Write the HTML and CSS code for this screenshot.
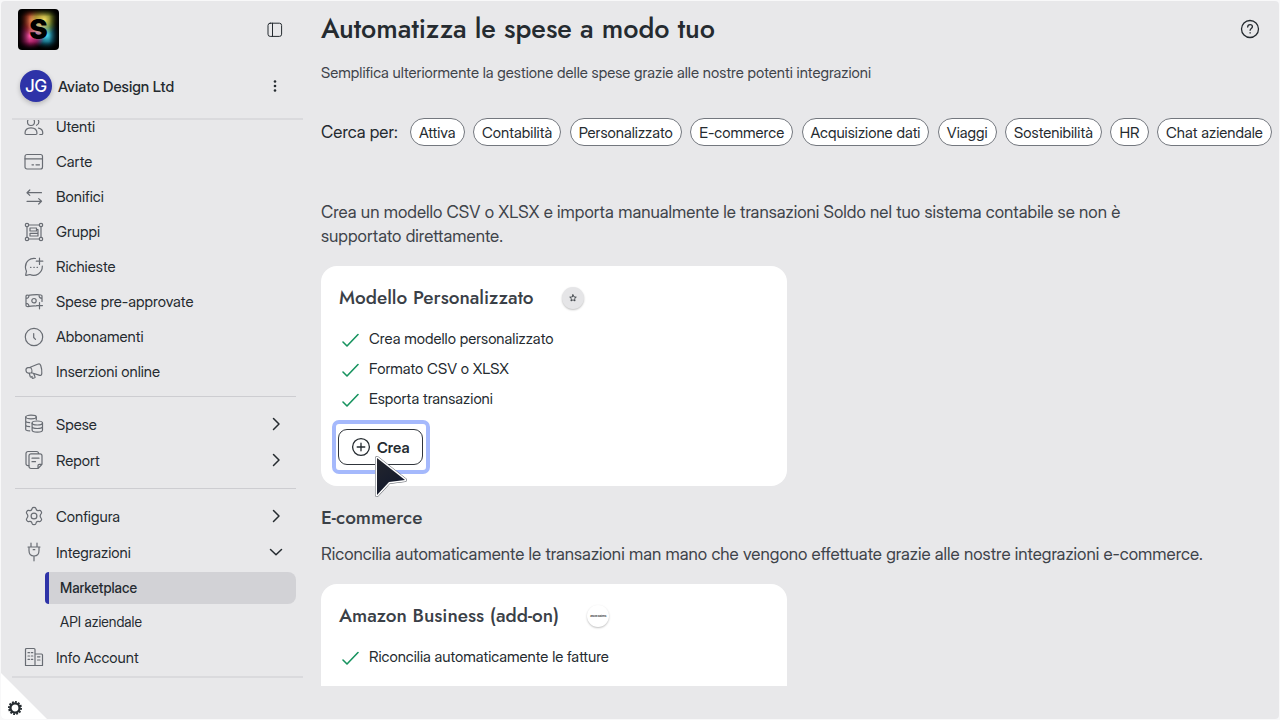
FILE: index.html
```html
<!DOCTYPE html>
<html lang="it">
<head>
<meta charset="utf-8">
<meta name="viewport" content="width=device-width, initial-scale=1">
<title>Automatizza le spese a modo tuo</title>
<link rel="stylesheet" href="styles.css">
</head>
<body>
<div class="shell">
  <aside class="sidebar">
    <div class="brand">
      <a class="logo" href="#" aria-label="Soldo">S</a>
      <button class="icon-btn" type="button" aria-label="Riduci menu">
        <svg width="16" height="16" viewBox="0 0 16 16"><rect x="1" y="1.200" width="13.600" height="13.200" rx="2.200"/><path d="M5.500 1.200v13.200"/></svg>
      </button>
    </div>
    <div class="account">
      <span class="avatar">JG</span>
      <span class="account-name">Aviato Design Ltd</span>
      <button class="icon-btn dots" type="button" aria-label="Altre opzioni">
        <svg width="16" height="16" viewBox="0 0 16 16"><circle cx="8" cy="3.500" r="1.300"/><circle cx="8" cy="8" r="1.300"/><circle cx="8" cy="12.500" r="1.300"/></svg>
      </button>
    </div>
    <nav class="nav">
      <div class="group first">
        <a class="item" href="#"><svg class="ico" viewBox="0 0 20 20"><circle cx="7" cy="5" r="3.500"/><path d="M12.500 1.700a3.500 3.500 0 0 1 0 6.600M1 16.300c0-3.300 2.200-5.500 6-5.500s6 2.200 6 5.500c0 .8-.5 1.200-1.200 1.200H2.200c-.7 0-1.200-.4-1.200-1.200zM14.500 11.200c2.800.5 4.300 2.500 4.300 5 0 .9-.5 1.300-1.300 1.300h-1.700"/></svg>Utenti</a>
        <a class="item" href="#"><svg class="ico" viewBox="0 0 20 20"><rect x="1" y="2.500" width="17.500" height="14.500" rx="2"/><path d="M1 6.800h17.500M8 12.800h1.500M12 12.800h3.500"/></svg>Carte</a>
        <a class="item" href="#"><svg class="ico" viewBox="0 0 20 20"><path d="M17.500 5.700H3M5.800 3 3 5.700l2.800 2.700M3 14.300h14.500M14.700 11.600l2.800 2.700-2.800 2.700"/></svg>Bonifici</a>
        <a class="item" href="#"><svg class="ico" viewBox="0 0 20 20"><circle cx="3" cy="3" r="1.700"/><circle cx="17" cy="3" r="1.700"/><circle cx="3" cy="17" r="1.700"/><circle cx="17" cy="17" r="1.700"/><path d="M4.700 3h10.600M4.700 17h10.600M3 4.700v10.600M17 4.700v10.600M6 6h6.500v3H6zM6 11.300h8V14H6zM12.500 7.500H14v3.800"/></svg>Gruppi</a>
        <a class="item" href="#"><svg class="ico" viewBox="0 0 20 20"><path d="M11.500 1.500C5.800.7 1.400 4.600 1.400 9.900c0 1.700.4 3 1.100 4.300L1.700 17.800c-.1.500.2.700.6.600l3.600-.9c5.700 2.500 12.700-1.300 12.400-8.500M15.500 1v6.500M12.300 4.200h6.500M6.500 10.300h.5M9.800 10.300h.5M13 10.300h.5"/></svg>Richieste</a>
        <a class="item" href="#"><svg class="ico" viewBox="0 0 20 20"><path d="M12 14c-3.500-.8-5.600.9-9 .5-.6-.1-1-.4-1-1V4.200c0-.7.4-1 1-1 4.500.4 8-1.300 14-.2.700.1 1 .5 1 1v5.500M2 6.500c2 0 3-1.300 3-3.200M2 11.300c1.800 0 3 1.200 3 3M18 6.300c-1.800 0-3-1.300-3-3.300M15.500 10.500v6.300M12.500 13.600h6"/><circle cx="10" cy="8.700" r="2.200"/></svg>Spese pre-approvate</a>
        <a class="item" href="#"><svg class="ico" viewBox="0 0 20 20"><circle cx="10" cy="10" r="8.700"/><path d="M9.700 6.500v4l1.800 1.800"/></svg>Abbonamenti</a>
        <a class="item" href="#"><svg class="ico" viewBox="0 0 20 20"><path d="m6.200 5.300 7.300-3.100c2-.8 2.600-.3 3.300 1.600.9 2.600 1.200 4.900 1 7.600-.2 2-1 2.300-2.800 1.700l-7.500-2.300M6.200 5.300 3.800 5.600C2.200 5.900 1.800 7 2 8.500c.2 1.700 1 2.700 2.700 2.500l2.800-.2c.9-1.700.2-4.300-1.300-5.500zM5.200 11l1 3.500c.2.500.5.700 1 .5l.9-.5v1.200c.2.600.5.700 1 .6l1.500-.5c.5-.2.600-.6.400-1l-1.300-3.100"/></svg>Inserzioni online</a>
      </div>
      <div class="group">
        <a class="item" href="#"><svg class="ico" viewBox="0 0 20 20"><ellipse cx="7" cy="3" rx="5.300" ry="1.800"/><path d="M1.700 3v12.200c0 1 2 1.600 4 1.700M1.700 7c0 .9 1.800 1.500 4 1.700M1.700 11c0 .9 1.800 1.500 4 1.700M12.300 3v2.700"/><ellipse cx="13.300" cy="9" rx="5.200" ry="2"/><path d="M8.100 9v7c0 1.200 2.300 2.100 5.200 2.100s5.200-.9 5.200-2.100V9M8.100 12.500c0 1.200 2.300 2 5.200 2s5.200-.8 5.200-2"/></svg>Spese<svg class="chev" viewBox="0 0 16 16"><path d="m5.500 2.500 5.500 5.500-5.500 5.500"/></svg></a>
        <a class="item" href="#"><svg class="ico" viewBox="0 0 20 20"><path d="M4.800 15.700H4A2 2 0 0 1 2 13.700V3.500a2 2 0 0 1 2-2h8.500a2 2 0 0 1 2 2"/><path d="M7 3.800h9a2 2 0 0 1 2 2v8.500L14 18.500H7a2 2 0 0 1-2-2V5.800a2 2 0 0 1 2-2zM18 14.300h-2.800c-.7 0-1.200.5-1.200 1.200v3M8 8.200h7M8 11.700h3.500"/></svg>Report<svg class="chev" viewBox="0 0 16 16"><path d="m5.500 2.500 5.500 5.500-5.500 5.500"/></svg></a>
      </div>
      <div class="group last">
        <a class="item" href="#"><svg class="ico" viewBox="0 0 20 20"><path d="M8.200 2.300c.5-1.200 3.100-1.200 3.600 0l.5 1.300c.4.700 1.100 1.100 1.900 1l1.300-.2c1.300-.2 2.600 2.100 1.800 3.100l-.8 1.200c-.4.700-.4 1.800 0 2.600l.8 1.200c.8 1-.5 3.300-1.800 3.100l-1.300-.2c-.8-.1-1.500.3-1.900 1l-.5 1.300c-.5 1.200-3.100 1.200-3.600 0l-.5-1.300c-.4-.7-1.100-1.100-1.900-1l-1.300.2c-1.300.2-2.600-2.100-1.800-3.100l.8-1.200c.4-.8.4-1.900 0-2.600l-.8-1.200c-.8-1 .5-3.300 1.800-3.100l1.300.2c.8.100 1.500-.3 1.900-1z"/><circle cx="10" cy="10" r="2.900"/></svg>Configura<svg class="chev" viewBox="0 0 16 16"><path d="m5.500 2.500 5.500 5.500-5.500 5.500"/></svg></a>
        <a class="item" href="#"><svg class="ico" viewBox="0 0 20 20"><path d="M7 1v4M13 1v4M4 5h12M5 5v3.500c0 3.500 2 5.500 5 5.500s5-2 5-5.500V5M10 14v4.800M9.200 7.700h1.600"/></svg>Integrazioni<svg class="chev" viewBox="0 0 16 16"><path d="m2.500 5.500 5.500 5.300 5.500-5.300"/></svg></a>
        <a class="sub active" href="#" aria-current="page">Marketplace</a>
        <a class="sub" href="#">API aziendale</a>
        <a class="item" href="#"><svg class="ico" viewBox="0 0 20 20"><path d="M1.500 18.500v-16a1 1 0 0 1 1-1H10a1 1 0 0 1 1 1v16M11 7h6.500a1 1 0 0 1 1 1v10.500H1.500M4 5.700h1.500M7.300 5.700h1.500M4 9h1.500M7.300 9h1.500M4 12.300h1.500M7.300 12.300h1.500M13.500 9.800H16M13.500 13H16"/></svg>Info Account</a>
      </div>
    </nav>
  </aside>

  <main class="main">
    <header class="head">
      <h1>Automatizza le spese a modo tuo</h1>
      <button class="icon-btn help" type="button" aria-label="Aiuto">
        <svg width="20" height="20" viewBox="0 0 20 20"><circle cx="10" cy="10" r="8.500"/><path d="M7.700 8c0-1.500 1-2.400 2.400-2.400s2.300.9 2.300 2.100c0 1.700-2.300 1.800-2.300 3.600M10.100 13.600v.5"/></svg>
      </button>
    </header>
    <p class="lead">Semplifica ulteriormente la gestione delle spese grazie alle nostre potenti integrazioni</p>
    <div class="filters">
      <span class="filters-label">Cerca per:</span>
      <button class="chip" type="button">Attiva</button>
      <button class="chip" type="button">Contabilità</button>
      <button class="chip" type="button">Personalizzato</button>
      <button class="chip" type="button">E-commerce</button>
      <button class="chip" type="button">Acquisizione dati</button>
      <button class="chip" type="button">Viaggi</button>
      <button class="chip" type="button">Sostenibilità</button>
      <button class="chip" type="button">HR</button>
      <button class="chip" type="button">Chat aziendale</button>
    </div>
    <section class="section">
      <p class="text narrow">Crea un modello CSV o XLSX e importa manualmente le transazioni Soldo nel tuo sistema contabile se non è supportato direttamente.</p>
      <div class="cards">
        <article class="card">
          <div class="card-head"><h3>Modello Personalizzato</h3>
            <span class="badge grey"><svg width="8" height="8" viewBox="0 0 20 20"><path d="m10 2 2.400 5.300 5.800.6-4.300 3.900 1.200 5.700-5.100-2.900-5.100 2.900 1.200-5.700-4.300-3.900 5.800-.6z"/></svg></span>
          </div>
          <ul class="list">
            <li><svg class="check" viewBox="0 0 18 18"><path d="m2 13 4 4L17 5.500"/></svg>Crea modello personalizzato</li>
            <li><svg class="check" viewBox="0 0 18 18"><path d="m2 13 4 4L17 5.500"/></svg>Formato CSV o XLSX</li>
            <li><svg class="check" viewBox="0 0 18 18"><path d="m2 13 4 4L17 5.500"/></svg>Esporta transazioni</li>
          </ul>
          <div class="ring">
            <button class="create" type="button"><svg width="20" height="20" viewBox="0 0 20 20"><circle cx="10" cy="10" r="8.400"/><path d="M10 6.200v7.600M6.200 10h7.600"/></svg>Crea</button>
            <svg class="cursor" width="40" height="46" viewBox="0 0 40 46"><defs><linearGradient id="cur" x1="0" y1="0" x2=".5" y2="1"><stop offset="0" stop-color="#24262d"/><stop offset="1" stop-color="#12192d"/></linearGradient></defs><path class="rim" d="M5 5v37l12-13 16-2z"/><path class="edge" d="M5 5v37l12-13 16-2z"/><path fill="url(#cur)" d="M5 5v37l12-13 16-2z"/></svg>
          </div>
        </article>
      </div>
    </section>
    <section class="section ecommerce">
      <h2>E-commerce</h2>
      <p class="text">Riconcilia automaticamente le transazioni man mano che vengono effettuate grazie alle nostre integrazioni e-commerce.</p>
      <div class="cards">
        <article class="card open">
          <div class="card-head"><h3>Amazon Business (add-on)</h3>
            <span class="badge"><span class="mini">amazon business</span></span>
          </div>
          <ul class="list">
            <li><svg class="check" viewBox="0 0 18 18"><path d="m2 13 4 4L17 5.500"/></svg>Riconcilia automaticamente le fatture</li>
          </ul>
        </article>
      </div>
    </section>
  </main>
  <button class="corner" type="button" aria-label="Impostazioni">
    <svg width="16" height="16" viewBox="0 0 16 16"><circle cx="8" cy="8" r="4.600"/><circle class="teeth" cx="8" cy="8" r="6.100" pathLength="120"/></svg>
  </button>
</div>
</body>
</html>
```

FILE: styles.css
```css
* { box-sizing: border-box; }
html, body { height: 100%; }
body {
  margin: 0;
  padding: 1px;
  background: #f8f8f9;
  color: #252b30;
  font-family: "Inter Display", Inter, "Liberation Sans", sans-serif;
  font-size: 15px;
}
svg { fill: none; stroke: currentColor; stroke-linecap: round; stroke-linejoin: round; }
a { color: inherit; text-decoration: none; }
button { font: inherit; color: inherit; }
h1, h2, h3, p, ul { margin: 0; padding: 0; }
h1, h2, h3 { font-family: Jost, Lato, sans-serif; font-weight: 500; }

.shell {
  position: relative;
  display: flex;
  height: 100%;
  overflow: hidden;
  border-radius: 4px;
  background: #e8e8ea;
}

.sidebar {
  flex: 0 0 303px;
  display: flex;
  flex-direction: column;
  padding: 8px 1px 41px 11px;
}
.brand {
  display: flex;
  align-items: center;
  justify-content: space-between;
  padding: 0 20px 0 6px;
}
.logo {
  width: 41px;
  height: 41px;
  border-radius: 4px;
  color: #000;
  font-size: 27px;
  font-weight: 900;
  line-height: 41px;
  text-align: center;
  background:
    linear-gradient(90deg, #000, transparent 28%, transparent 76%, #000),
    linear-gradient(#000, transparent 18%, transparent 80%, #000),
    radial-gradient(circle at 50% 50%, rgba(255, 255, 255, .55), transparent 40%),
    radial-gradient(circle at 64% 26%, #f0dc60, rgba(160, 180, 50, .6) 22%, transparent 38%),
    radial-gradient(circle at 36% 28%, #f58a5b, rgba(180, 55, 30, .7) 22%, transparent 38%),
    radial-gradient(circle at 28% 66%, #ff55a8, rgba(190, 25, 110, .7) 22%, transparent 38%),
    radial-gradient(circle at 70% 64%, #46d8f0, rgba(20, 120, 150, .7) 22%, transparent 38%),
    #000;
}
.icon-btn {
  display: flex;
  padding: 0;
  border: 0;
  background: none;
}
.account {
  display: flex;
  align-items: center;
  gap: 6px;
  padding: 20px 20px 16px 8px;
}
.avatar {
  width: 32px;
  height: 32px;
  border-radius: 50%;
  background: #2e33a8;
  box-shadow: 0 2px 5px rgba(0, 0, 0, .22);
  color: #fff;
  font-size: 17px;
  font-weight: 500;
  line-height: 32px;
  text-align: center;
}
.account-name { flex: 1; font-weight: 500; }
.dots svg { fill: currentColor; stroke: none; }

.nav {
  flex: 1;
  min-height: 0;
  overflow: hidden;
  padding: 0 7px 0 3px;
  border-top: 2px solid #dadadd;
  border-bottom: 2px solid #dadadd;
}
.group { padding: 9px 0 10px; border-bottom: 1px solid #cdcdd1; }
.group.first { margin-top: -11px; padding: 0 0 7px; }
.group.last { border: 0; padding-bottom: 0; }
.item {
  display: flex;
  align-items: center;
  gap: 12px;
  height: 36px;
  padding: 0 12px 0 9px;
}
.first .item { height: 35px; }
.ico { width: 20px; height: 20px; color: #686c73; stroke-width: 1.2; }
.chev { width: 16px; height: 16px; margin-left: auto; stroke-width: 1.5; }
.sub {
  display: block;
  height: 35px;
  margin-left: 30px;
  padding-left: 15px;
  font-size: 14px;
  line-height: 36px;
}
.sub.active {
  height: 32px;
  margin-top: 2px;
  padding-left: 11px;
  border-left: 4px solid #2e33a8;
  border-radius: 4px 8px 8px 4px;
  background: #d2d2d6;
  font-weight: 500;
  line-height: 32px;
}

.main {
  flex: 1;
  min-width: 0;
  margin: 0 0 33px;
  padding: 0 7px 0 17px;
  overflow: hidden;
}
.head {
  display: flex;
  align-items: center;
  justify-content: space-between;
  padding: 8px 12px 0 0;
}
h1 { font-size: 27px; line-height: 40px; }
.help { stroke-width: 1.3; }
.lead { margin-top: 14px; line-height: 20px; color: #3f444a; }
.filters {
  display: flex;
  align-items: center;
  justify-content: space-between;
  margin-top: 35px;
  white-space: nowrap;
}
.filters-label { margin-right: 4px; font-size: 17px; }
.chip {
  height: 28px;
  padding: 0 8px;
  border: 1px solid #73777e;
  border-radius: 14px;
  background: #fff;
}
.section { margin-top: 54px; }
.section.ecommerce { margin-top: 20px; }
h2 { font-size: 19px; line-height: 24px; color: #3a4047; }
.text { font-size: 17px; line-height: 24px; color: #3f444a; }
.ecommerce .text { margin-top: 12px; }
.narrow { max-width: 836px; }
.cards {
  display: grid;
  grid-template-columns: repeat(2, 1fr);
  gap: 20px;
  margin-top: 18px;
}
.card {
  padding: 17px 18px 12px;
  border-radius: 16px;
  background: #fff;
}
.card.open { padding-bottom: 40px; }
.card-head { display: flex; align-items: center; gap: 28px; }
h3 { font-size: 19px; line-height: 30px; color: #3a4047; }
.badge {
  display: flex;
  align-items: center;
  justify-content: center;
  width: 22px;
  height: 22px;
  border-radius: 50%;
  box-shadow: 0 1px 2px rgba(0, 0, 0, .25);
}
.badge.grey { background: #e5e5e7; }
.badge svg { stroke-width: 2; }
.mini { font-size: 2px; font-weight: 700; white-space: nowrap; }
.list { margin-top: 10px; list-style: none; }
.list li { display: flex; align-items: center; gap: 10px; height: 30px; padding-left: 2px; }
.check { width: 18px; height: 18px; color: #17935f; stroke-width: 1.6; }
.ring {
  position: relative;
  width: fit-content;
  margin: 7px 0 0 -7px;
  padding: 5px 3px 5px 2px;
  border: 4px solid #a5b9fc;
  border-radius: 7px;
}
.create {
  display: flex;
  align-items: center;
  gap: 6px;
  height: 36px;
  padding: 0 12px;
  border: 1px solid #30353b;
  border-radius: 9px;
  background: #fff;
  font-weight: 600;
}
.create svg { stroke-width: 1.3; }
.cursor { position: absolute; left: 36px; top: 29px; }
.cursor path { stroke: none; }
.cursor .rim { stroke: #555961; stroke-width: 4; }
.cursor .edge { stroke: #fff; stroke-width: 3; }
.corner {
  position: absolute;
  left: 0;
  bottom: 0;
  display: flex;
  align-items: flex-end;
  width: 46px;
  height: 46px;
  padding: 0 0 3px 6px;
  border: 0;
  background: #fff;
  clip-path: polygon(0 0, 100% 100%, 0 100%);
}
.corner svg { stroke-width: 2.4; }
.corner .teeth { stroke-dasharray: 6 4; stroke-linecap: butt; stroke-width: 1.8; }
```
